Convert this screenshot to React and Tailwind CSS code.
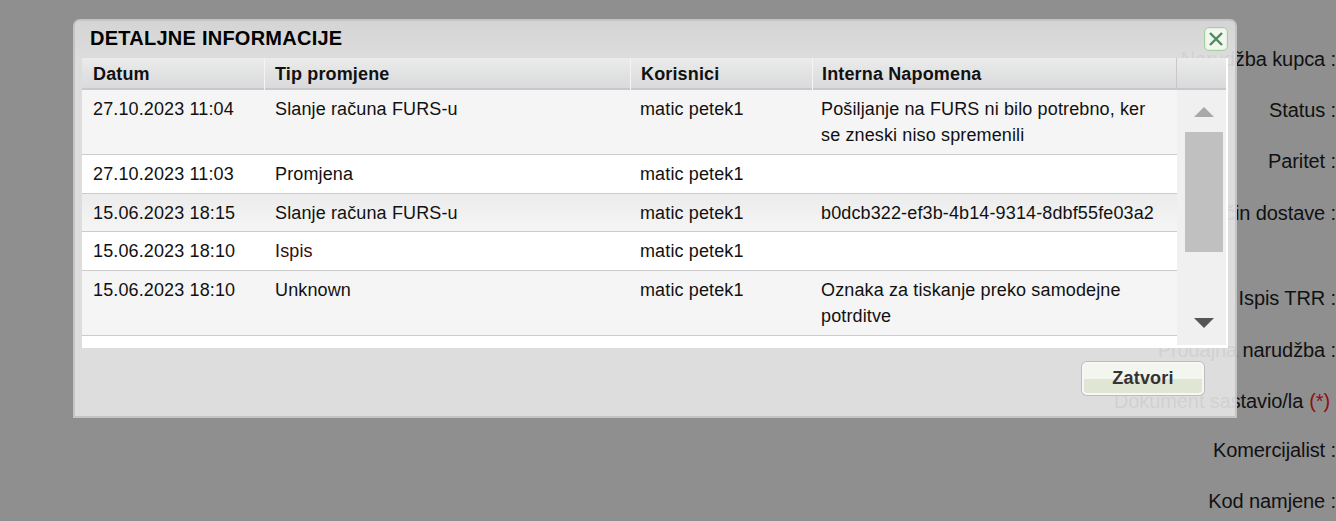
import React from 'react';

const rows = [
  { date: '27.10.2023 11:04', type: 'Slanje računa FURS-u', user: 'matic petek1', note: 'Pošiljanje na FURS ni bilo potrebno, ker se zneski niso spremenili', h: 'h-[65px]', bg: 'bg-[#f5f5f5]' },
  { date: '27.10.2023 11:03', type: 'Promjena', user: 'matic petek1', note: '', h: 'h-[39px]', bg: 'bg-white' },
  { date: '15.06.2023 18:15', type: 'Slanje računa FURS-u', user: 'matic petek1', note: 'b0dcb322-ef3b-4b14-9314-8dbf55fe03a2', h: 'h-[38px]', bg: 'bg-gradient-to-b from-[#ececec] to-[#f5f5f5]' },
  { date: '15.06.2023 18:10', type: 'Ispis', user: 'matic petek1', note: '', h: 'h-[39px]', bg: 'bg-white', red: true },
  { date: '15.06.2023 18:10', type: 'Unknown', user: 'matic petek1', note: 'Oznaka za tiskanje preko samodejne potrditve', h: 'h-[65px]', bg: 'bg-[#f5f5f5]' },
];

const labels = [
  { text: 'Narudžba kupca :', mb: 'mb-[28px]' },
  { text: 'Status :', mb: 'mb-[28px]' },
  { text: 'Paritet :', mb: 'mb-[29px]' },
  { text: 'Način dostave :', mb: 'mb-[62px]' },
  { text: 'Ispis TRR :', mb: 'mb-[29px]' },
  { text: 'Prodajna narudžba :', mb: 'mb-[28px]' },
  { text: 'Dokument sastavio/la', star: true, mb: 'mb-[26px]' },
  { text: 'Komercijalist :', mb: 'mb-[28px]' },
  { text: 'Kod namjene :', mb: '' },
];

const columns = 'grid grid-cols-[183px_366px_182px_364px]';

export default function App() {
  return (
    <div className="relative h-[521px] overflow-hidden bg-[#8f8f8f] font-['Liberation_Sans',Arial,sans-serif]">
      <div className="flex flex-col items-end pt-[48px] text-[20px] leading-[23px] tracking-[-0.1px] text-[#111]">
        {labels.map((l, i) => (
          <div key={i} className={l.mb}>
            {l.text}
            {l.star && <span className="ml-[6px] mr-[6px] text-[#8f0f0f]">(*)</span>}
          </div>
        ))}
      </div>

      <div className="absolute left-[73px] top-[19px] flex h-[399px] w-[1164px] flex-col rounded-t-[7px] border-2 border-[#c4c4c4] bg-[#e6e6e6]/90 px-[7px]">
        <div className="absolute inset-x-0 top-0 h-[40px] rounded-t-[6px] bg-gradient-to-b from-[#cfcfcf]/60 to-transparent"></div>
        <h2 className="relative h-[37px] pl-[8px] pt-[5px] text-[20px] font-bold leading-[24px] tracking-[0.25px] text-black">DETALJNE INFORMACIJE</h2>

        <button className="absolute left-[1129px] top-[6px] flex h-[24px] w-[24px] items-center justify-center rounded-[5px] border border-[#a6cfa0] bg-[#f1f6ef] shadow-[inset_0_0_0_1px_#e2f0df]">
          <svg width="16" height="16" viewBox="0 0 16 16" fill="none" stroke="#4f8a5a" strokeWidth="2.4">
            <path d="M2 2 L14 14 M14 2 L2 14" />
          </svg>
        </button>

        <div className="relative flex h-[290px] w-[1146px] flex-col border-r-[2px] border-white bg-white">
          <div className="flex h-[32px] border-b-2 border-[#c8c8c8] bg-gradient-to-b from-[#ebebeb] to-[#d9dadc] text-[18px] font-bold leading-[32px] tracking-[0.15px] text-[#111]">
            <div className={columns}>
              <div className="border-r border-[#f4f4f4] pl-[11px]">Datum</div>
              <div className="border-r border-[#f4f4f4] pl-[10px]">Tip promjene</div>
              <div className="border-r border-[#f4f4f4] pl-[10px]">Korisnici</div>
              <div className="border-r border-[#c8c8c8] pl-[9px]">Interna Napomena</div>
            </div>
          </div>
          <div className="flex min-h-0 flex-1">
            <div className="w-[1095px]">
              {rows.map((row, i) => (
                <div key={i} className={`${columns} ${row.h} ${row.bg} border-b border-[#cccccc] text-[18px] leading-[26px] tracking-[0.13px] text-[#111]`}>
                  <div className="pl-[11px] pt-[6px]">{row.date}</div>
                  <div className={`pl-[10px] pt-[6px] ${row.red ? 'text-[#3a0a0a]' : ''}`}>{row.type}</div>
                  <div className="pl-[9px] pt-[6px]">{row.user}</div>
                  <div className="pl-[8px] pr-[20px] pt-[6px]">{row.note}</div>
                </div>
              ))}
            </div>
            <div className="flex w-[49px] flex-col items-center border-b-[3px] border-white bg-[#f0f0f0] pl-[4px] pt-[17px]">
              <div className="h-0 w-0 border-x-[10px] border-b-[10px] border-x-transparent border-b-[#a8a8a8]"></div>
              <div className="mt-[15px] h-[120px] w-[38px] bg-[#c0c0c0]"></div>
              <div className="mt-[66px] h-0 w-0 border-x-[10px] border-t-[10px] border-x-transparent border-t-[#555555]"></div>
            </div>
          </div>
        </div>

        <div className="relative flex flex-1 items-start justify-end pr-[24px] pt-[14px]">
          <button className="h-[33px] w-[122px] rounded-[5px] border-2 border-[#f7f7f7] bg-gradient-to-b from-[#f3f5ef] from-50% to-[#dfe6d4] to-50% text-[18px] font-bold tracking-[0.2px] text-[#333] shadow-[0_0_0_1px_#bdbdbd]">
            Zatvori
          </button>
        </div>
      </div>
    </div>
  );
}
